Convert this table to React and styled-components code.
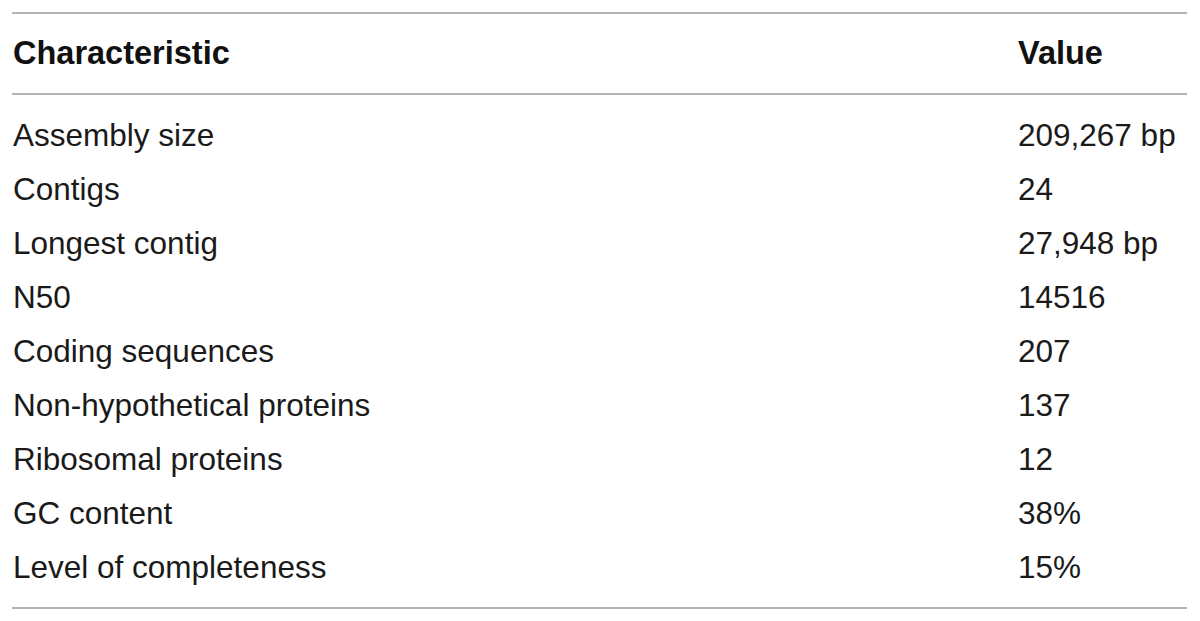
import React from "react";
import styled, { createGlobalStyle } from "styled-components";

const rows = [
  ["Assembly size", "209,267 bp"],
  ["Contigs", "24"],
  ["Longest contig", "27,948 bp"],
  ["N50", "14516"],
  ["Coding sequences", "207"],
  ["Non-hypothetical proteins", "137"],
  ["Ribosomal proteins", "12"],
  ["GC content", "38%"],
  ["Level of completeness", "15%"],
];

function App() {
  return (
    <>
      <GlobalStyle />
      <Page>
        <Table>
          <HeadRow>
            <HeadCell>Characteristic</HeadCell>
            <HeadCell>Value</HeadCell>
          </HeadRow>
          <Body>
            {rows.map(([name, value]) => (
              <Row key={name}>
                <Cell>{name}</Cell>
                <Cell>{value}</Cell>
              </Row>
            ))}
          </Body>
        </Table>
      </Page>
    </>
  );
}

const GlobalStyle = createGlobalStyle`
  body {
    margin: 0;
    background: #ffffff;
    font-family: "Liberation Sans", Arial, sans-serif;
  }
`;

const Page = styled.div`
  width: 1200px;
  height: 621px;
  box-sizing: border-box;
  padding: 12px 13px 0 12px;
`;

const Table = styled.div`
  display: flex;
  flex-flow: column nowrap;
  border-top: 2px solid #b3b3b3;
  border-bottom: 2px solid #b3b3b3;
`;

const HeadRow = styled.div`
  display: grid;
  grid-template-columns: 1005px 1fr;
  align-items: center;
  height: 79px;
  border-bottom: 2px solid #b3b3b3;
`;

const HeadCell = styled.div`
  padding-left: 1px;
  font-size: 32.5px;
  font-weight: 700;
  color: #111111;
`;

const Body = styled.div`
  display: flex;
  flex-flow: column nowrap;
  padding: 13px 0 13px;
`;

const Row = styled.div`
  display: grid;
  grid-template-columns: 1005px 1fr;
  align-items: center;
  height: 54px;
`;

const Cell = styled.div`
  padding-left: 1px;
  font-size: 31.5px;
  color: #1a1a1a;
`;

export default App;
